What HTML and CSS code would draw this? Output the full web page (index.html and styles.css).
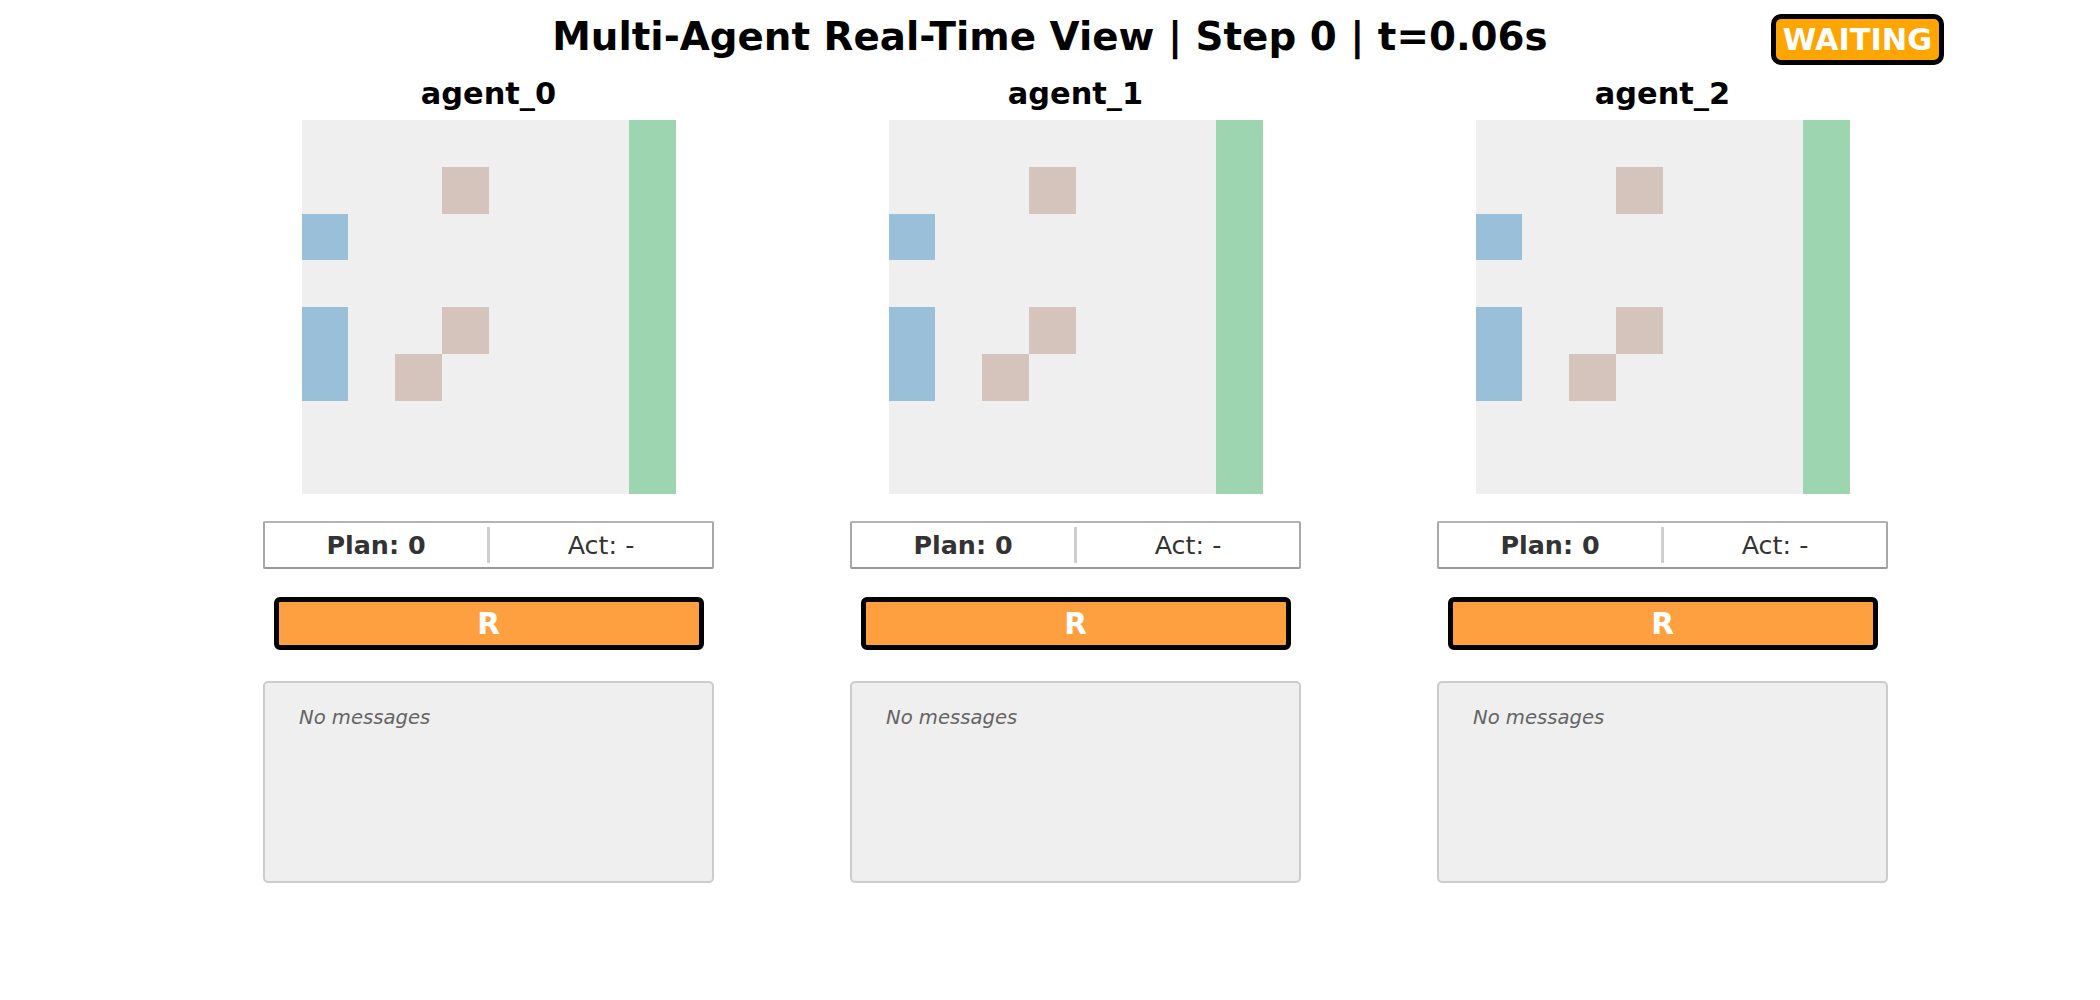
FILE: index.html
```html
<!DOCTYPE html>
<html lang="en">
<head>
  <meta charset="UTF-8" />
  <title>Multi-Agent Real-Time View</title>
  <link rel="stylesheet" href="styles.css">
</head>
<body>
  <header class="top">
    <h1>Multi-Agent Real-Time View | Step 0 | t=0.06s</h1>
    <div class="status">WAITING</div>
  </header>

  <main class="agents">
    <section class="agent">
      <h2>agent_0</h2>
      <div class="board">
        <div class="cell box" style="grid-area: 2 / 4"></div>
        <div class="cell unit" style="grid-area: 3 / 1"></div>
        <div class="cell unit" style="grid-area: 5 / 1 / 7 / 2"></div>
        <div class="cell box" style="grid-area: 5 / 4"></div>
        <div class="cell box" style="grid-area: 6 / 3"></div>
        <div class="cell goal" style="grid-area: 1 / 8 / 9 / 9"></div>
      </div>
      <div class="stats">
        <span class="plan">Plan: 0</span>
        <span class="sep"></span>
        <span class="act">Act: -</span>
      </div>
      <button class="role">R</button>
      <div class="msgs">No messages</div>
    </section>

    <section class="agent">
      <h2>agent_1</h2>
      <div class="board">
        <div class="cell box" style="grid-area: 2 / 4"></div>
        <div class="cell unit" style="grid-area: 3 / 1"></div>
        <div class="cell unit" style="grid-area: 5 / 1 / 7 / 2"></div>
        <div class="cell box" style="grid-area: 5 / 4"></div>
        <div class="cell box" style="grid-area: 6 / 3"></div>
        <div class="cell goal" style="grid-area: 1 / 8 / 9 / 9"></div>
      </div>
      <div class="stats">
        <span class="plan">Plan: 0</span>
        <span class="sep"></span>
        <span class="act">Act: -</span>
      </div>
      <button class="role">R</button>
      <div class="msgs">No messages</div>
    </section>

    <section class="agent">
      <h2>agent_2</h2>
      <div class="board">
        <div class="cell box" style="grid-area: 2 / 4"></div>
        <div class="cell unit" style="grid-area: 3 / 1"></div>
        <div class="cell unit" style="grid-area: 5 / 1 / 7 / 2"></div>
        <div class="cell box" style="grid-area: 5 / 4"></div>
        <div class="cell box" style="grid-area: 6 / 3"></div>
        <div class="cell goal" style="grid-area: 1 / 8 / 9 / 9"></div>
      </div>
      <div class="stats">
        <span class="plan">Plan: 0</span>
        <span class="sep"></span>
        <span class="act">Act: -</span>
      </div>
      <button class="role">R</button>
      <div class="msgs">No messages</div>
    </section>
  </main>
</body>
</html>
```

FILE: styles.css
```css
body {
  margin: 0;
  width: 2100px;
  height: 1000px;
  background: #fff;
  font-family: "DejaVu Sans", "Liberation Sans", sans-serif;
  color: #000;
}

.top {
  position: relative;
  padding-top: 16px;
}
.top h1 {
  margin: 0;
  text-align: center;
  font-size: 38.8px;
  line-height: 41px;
  font-weight: bold;
}
.status {
  position: absolute;
  left: 1771px;
  top: 14px;
  width: 173px;
  height: 51px;
  box-sizing: border-box;
  border: 5px solid #000;
  border-radius: 10px;
  background: #ffa500;
  color: #fff;
  font-weight: bold;
  font-size: 30.4px;
  display: flex;
  align-items: center;
  justify-content: center;
}

.agents {
  display: grid;
  grid-template-columns: repeat(3, 451px);
  column-gap: 136px;
  padding-left: 263px;
  margin-top: 19px;
}
.agent {
  display: flex;
  flex-direction: column;
  align-items: center;
}
.agent h2 {
  margin: 0;
  font-size: 30.4px;
  line-height: 36px;
  font-weight: bold;
}

.board {
  margin-top: 8px;
  width: 374px;
  height: 374px;
  background: #efefef;
  display: grid;
  grid-template-columns: repeat(8, 1fr);
  grid-template-rows: repeat(8, 1fr);
}
.cell.box { background: #d5c4bc; }
.cell.unit { background: #9abfd8; }
.cell.goal { background: #9dd5b0; }

.stats {
  margin-top: 27px;
  width: 451px;
  height: 48px;
  box-sizing: border-box;
  border: 2px solid #a8a8a8;
  border-top-color: #b4b4b4;
  border-bottom-color: #999;
  border-radius: 2px;
  display: flex;
  align-items: center;
  color: #333;
  font-size: 25.4px;
}
.stats .plan, .stats .act {
  flex: 1;
  text-align: center;
}
.stats .plan { font-weight: bold; }
.stats .sep {
  width: 3px;
  height: 36px;
  background: #cfcfcf;
}

.role {
  margin-top: 28px;
  width: 430px;
  height: 53px;
  box-sizing: border-box;
  border: 5px solid #000;
  border-radius: 6px;
  background: #ffa040;
  color: #fff;
  font-family: inherit;
  font-weight: bold;
  font-size: 29.5px;
  padding: 0;
}

.msgs {
  margin-top: 31px;
  width: 451px;
  height: 202px;
  box-sizing: border-box;
  border: 2px solid #cccccc;
  border-radius: 5px;
  background: #efefef;
  padding: 23px 0 0 34px;
  font-size: 19.6px;
  line-height: 24px;
  font-style: italic;
  color: #646464;
}
```
